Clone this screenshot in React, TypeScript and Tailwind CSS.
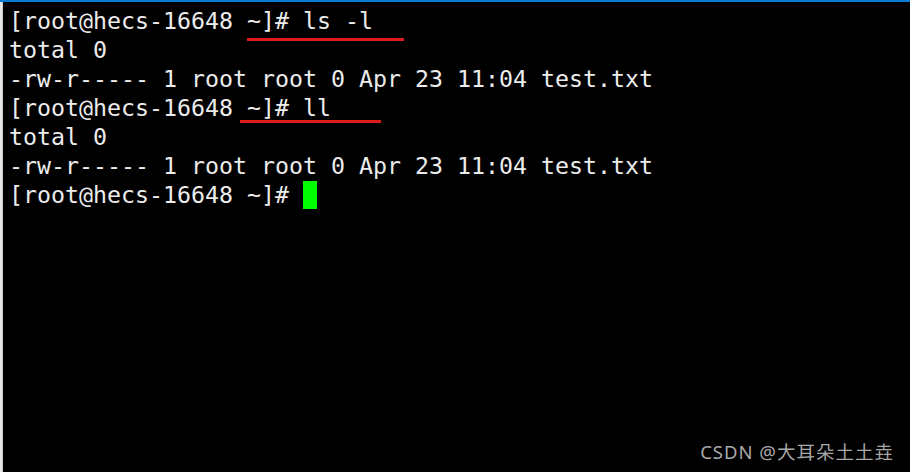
const lines = [
  "[root@hecs-16648 ~]# ls -l",
  "total 0",
  "-rw-r----- 1 root root 0 Apr 23 11:04 test.txt",
  "[root@hecs-16648 ~]# ll",
  "total 0",
  "-rw-r----- 1 root root 0 Apr 23 11:04 test.txt",
]

export default function App() {
  return (
    <div className="w-[910px] h-[472px] flex flex-col bg-black overflow-hidden">
      <div className="h-[2px] bg-[#0a7ad4]" />
      <div className="flex flex-1">
        <div className="w-[3px] bg-[#e6e6e6] border-r border-[#c8c8c8]" />
        <div className="relative flex-1 pl-[6px] pt-[4px] font-['DejaVu_Sans_Mono',monospace] text-[23.25px] leading-[29px] text-[#ececec] whitespace-pre">
          {lines.map((l, i) => (
            <div key={i}>{l}</div>
          ))}
          <div className="flex items-center">
            <span>[root@hecs-16648 ~]# </span>
            <span className="inline-block w-[14px] h-[28px] bg-[#00ff00]" />
          </div>

          {/* red annotation lines */}
          <div className="absolute left-[244px] top-[36px] w-[157px] h-[3px] bg-[#e01b1b]" />
          <div className="absolute left-[237px] top-[118px] w-[141px] h-[3px] bg-[#e01b1b]" />

          <div className="absolute right-[16px] bottom-[8px] font-['Noto_Sans','Noto_Sans_CJK_SC',sans-serif] text-[18.5px] leading-[24px] tracking-[1px] text-[#a8a8a8]">
            CSDN @大耳朵土土垚
          </div>
        </div>
      </div>
    </div>
  )
}
